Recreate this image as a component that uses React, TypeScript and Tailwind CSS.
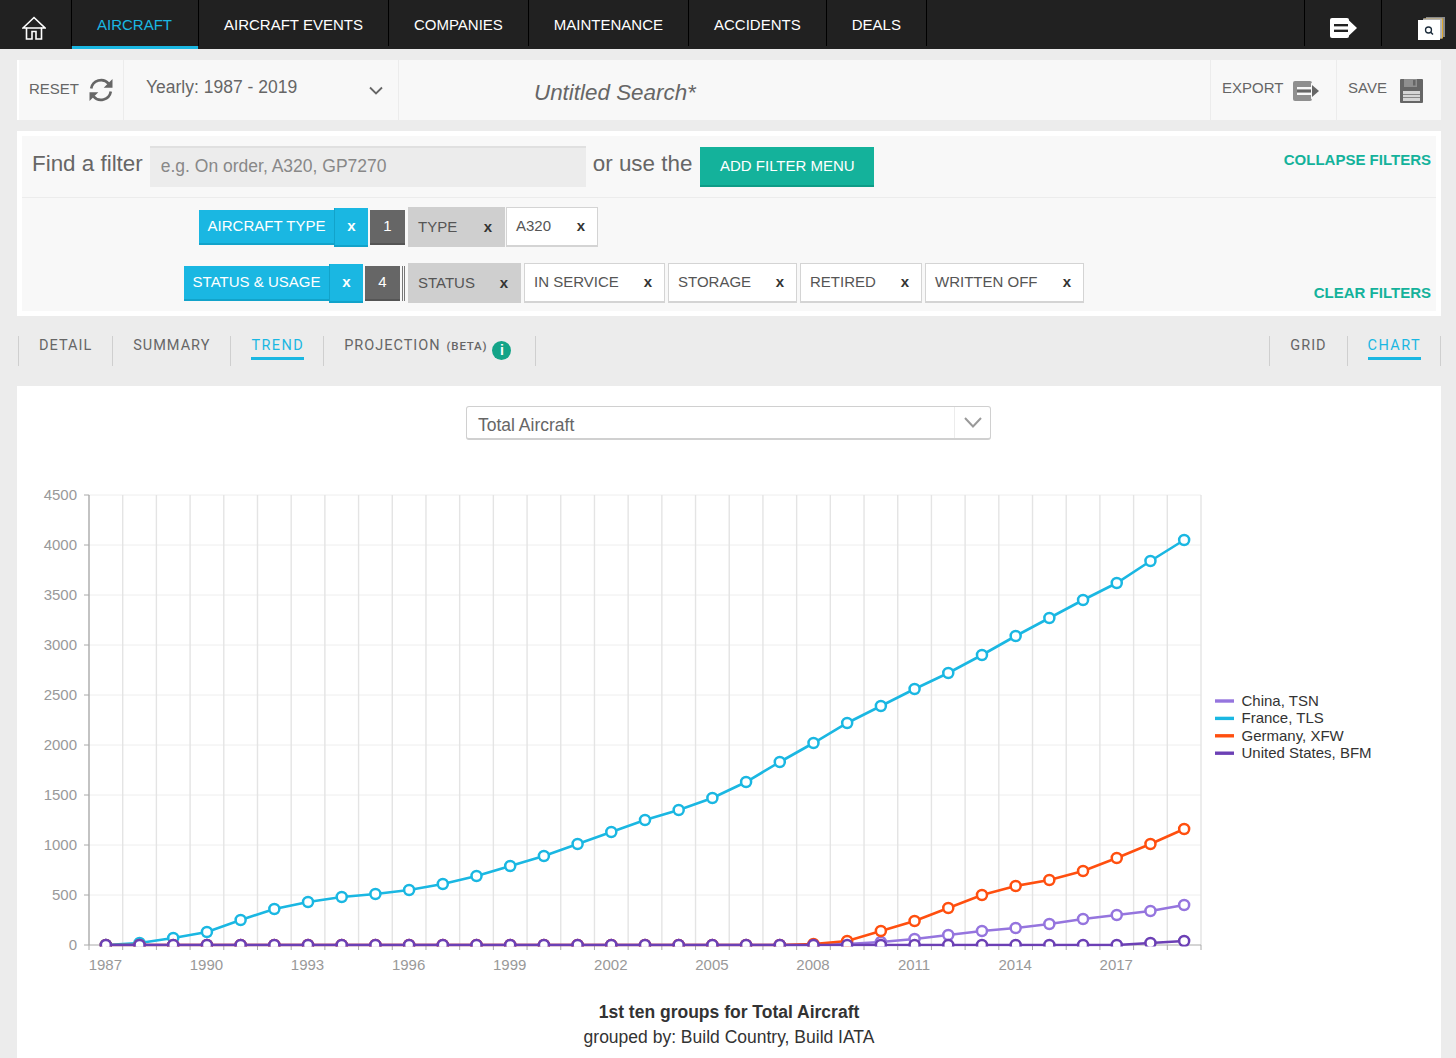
const arial = "font-['Liberation_Sans',Arial,sans-serif]";

const NAV_ITEMS = ['AIRCRAFT', 'AIRCRAFT EVENTS', 'COMPANIES', 'MAINTENANCE', 'ACCIDENTS', 'DEALS'];

const PLOT = { left: 89, right: 1201, top: 495, bottom: 945 };
const STEP = (PLOT.right - PLOT.left) / 33;
const pointX = (i: number) => PLOT.left + STEP * (i + 0.5);

const flat = (n: number) => Array.from({ length: n }, () => 945);

// y positions of each series, one per year from 1987
const SERIES = [
  {
    name: 'China, TSN',
    color: '#9575de',
    ys: [...flat(22), 944, 942, 939, 935, 931, 928, 924, 919, 915, 911, 905],
  },
  {
    name: 'France, TLS',
    color: '#1ab7e2',
    ys: [945, 943, 938, 932, 920, 909, 902, 897, 894, 890, 884, 876, 866, 856, 844, 832, 820, 810, 798, 782, 762, 743, 723, 706, 689, 673, 655, 636, 618, 600, 583, 561, 540],
  },
  {
    name: 'Germany, XFW',
    color: '#ff4f0f',
    ys: [...flat(21), 944, 941, 931, 921, 908, 895, 886, 880, 871, 858, 844, 829],
  },
  {
    name: 'United States, BFM',
    color: '#6c40b5',
    ys: [...flat(31), 943, 941],
  },
];

function HomeIcon() {
  return (
    <svg width="24" height="24" viewBox="0 0 24 24" fill="none" stroke="#fff" strokeWidth="1.6">
      <path d="M1 12 L12 1.5 L23 12 Z" fill="#212121" strokeLinejoin="miter" />
      <path d="M4.5 11.5 V23 H10 V15.5 H14 V23 H19.5 V11.5" />
    </svg>
  );
}

function RefreshIcon() {
  return (
    <svg width="24" height="24" viewBox="0 0 24 24" fill="none">
      <path d="M2.2 10.5 A10 10 0 0 1 19.6 5.6" stroke="#666" strokeWidth="2.6" />
      <path d="M23.5 1 V9.8 H14.7 Z" fill="#666" />
      <path d="M21.8 13.5 A10 10 0 0 1 4.4 18.4" stroke="#666" strokeWidth="2.6" />
      <path d="M0.5 23 V14.2 H9.3 Z" fill="#666" />
    </svg>
  );
}

function ExportIcon({ box, arrow, gap, head }: { box: string; arrow: string; gap: string; head: string }) {
  return (
    <svg width="27" height="20" viewBox="0 0 27 20">
      <rect x="0" y="0" width="19" height="20" rx="2" fill={box} />
      <rect x="4" y="6" width="15" height="2.6" fill={gap} />
      <rect x="4" y="11.4" width="15" height="2.6" fill={gap} />
      <rect x="4" y="8.6" width="15" height="2.8" fill={arrow} />
      <path d="M18 1.5 L27 10 L18 18.5 Z" fill={head} />
      <path d="M19 4 L26 10 L19 16 Z" fill={arrow} />
    </svg>
  );
}

function SaveIcon() {
  return (
    <svg width="23" height="24" viewBox="0 0 23 24">
      <path d="M1 0 H22 Q23 0 23 1 V23 Q23 24 22 24 H1 Q0 24 0 23 V1 Q0 0 1 0 Z" fill="#666" />
      <rect x="4" y="0" width="13" height="8" fill="#8f8f8f" />
      <rect x="13" y="1" width="2.5" height="5.5" fill="#666" />
      <rect x="3" y="12" width="17" height="10" fill="#d5d5d5" />
      <rect x="3" y="15" width="17" height="1" fill="#888" />
      <rect x="3" y="18" width="17" height="1" fill="#888" />
    </svg>
  );
}

function StackIcon() {
  return (
    <svg width="27" height="24" viewBox="0 0 27 24">
      <rect x="8" y="0" width="19" height="20" fill="#8a8a8a" />
      <rect x="6" y="1.5" width="19" height="20" fill="#e0a92c" />
      <rect x="5" y="1.5" width="19" height="20" fill="#b5b5b5" />
      <rect x="0" y="3" width="22" height="20" fill="#fff" />
      <circle cx="10.5" cy="13" r="3" fill="none" stroke="#1b2b3a" strokeWidth="1.3" />
      <path d="M12.5 15 L15 17.5" stroke="#1b2b3a" strokeWidth="1.5" />
    </svg>
  );
}

function TopNav() {
  return (
    <div className="flex h-[49px] bg-[#212121]">
      <div className="flex h-[46px] w-[72px] items-center justify-center border-r border-black pr-[4px] pt-[10px]">
        <HomeIcon />
      </div>
      {NAV_ITEMS.map((item, i) => (
        <div
          key={item}
          className={
            i === 0
              ? 'flex h-[49px] w-[126px] items-center border-b-[3px] border-[#1ab7e2] pl-[25px] pt-[5px] text-[15px] text-[#1ab7e2]'
              : i === 1
                ? 'flex h-[46px] items-center border-x border-black px-[25px] pt-[5px] text-[15px] text-white'
                : 'flex h-[46px] items-center border-r border-black px-[25px] pt-[5px] text-[15px] text-white'
          }
        >
          {item}
        </div>
      ))}
      <div className="ml-auto flex h-[46px] w-[77px] items-center justify-center border-l border-black pt-[10px]">
        <ExportIcon box="#fff" arrow="#fff" gap="#212121" head="#fff" />
      </div>
      <div className="flex h-[46px] w-[75px] items-center justify-end border-l border-black pr-[11px] pt-[11px]">
        <StackIcon />
      </div>
    </div>
  );
}

function Toolbar() {
  return (
    <div className="ml-[17px] mr-[15px] mt-[11px] flex h-[60px] border-l-2 border-white bg-[#f8f8f8] text-[#666]">
      <div className="flex w-[105px] items-center border-r border-[#ececec] pl-[10px] text-[15px]">
        <span className="pb-[2px]">RESET</span>
        <span className="ml-[10px]">
          <RefreshIcon />
        </span>
      </div>
      <div className="flex w-[275px] items-center justify-between border-r border-[#ececec] pb-[6px] pl-[22px] pr-[15px] text-[17.5px]">
        <span>Yearly: 1987 - 2019</span>
        <svg width="14" height="9" viewBox="0 0 14 9" fill="none" stroke="#666" strokeWidth="1.8" className="mt-[7px]">
          <path d="M1 1.5 L7 7.5 L13 1.5" />
        </svg>
      </div>
      <div className="flex-1 pl-[135px] pt-[16px] text-[22.4px] italic">Untitled Search*</div>
      <div className="flex w-[126px] items-center border-l border-[#ececec] pb-[4px] pl-[11px] text-[15px]">
        <span>EXPORT</span>
        <span className="ml-[10px] mt-[6px]">
          <ExportIcon box="#8f8f8f" arrow="#666" gap="#f8f8f8" head="#f8f8f8" />
        </span>
      </div>
      <div className="flex w-[105px] items-center border-l border-[#ececec] pb-[4px] pl-[11px] text-[15px]">
        <span>SAVE</span>
        <span className="ml-[13px] mt-[6px]">
          <SaveIcon />
        </span>
      </div>
    </div>
  );
}

function Chip({ label, width, gray }: { label: string; width: number; gray?: boolean }) {
  return (
    <div
      style={{ width }}
      className={
        gray
          ? 'flex h-[40px] items-center justify-between bg-[#cfcfcf] pl-[10px] pr-[13px] text-[15px] text-[#555]'
          : 'flex h-[40px] items-center justify-between border border-b-2 border-[#d4d4d4] bg-white pl-[9px] pr-[12px] text-[15px] text-[#555]'
      }
    >
      <span>{label}</span>
      <span className="text-[15px] font-bold text-[#333]">x</span>
    </div>
  );
}

function GroupTag({ label, width, count }: { label: string; width: number; count: string }) {
  return (
    <>
      <div
        style={{ width }}
        className="flex h-[35px] items-center justify-center border-b-2 border-[#12a3ca] bg-[#1ab7e2] text-[15px] text-white"
      >
        {label}
      </div>
      <div className="flex h-[39px] w-[34px] items-center justify-center border-b-2 border-[#12a3ca] border-l border-l-[#12a3ca] bg-[#1ab7e2] text-[15px] font-bold text-white">
        x
      </div>
      <div className="ml-[2px] flex h-[35px] w-[35px] items-center justify-center border-b-2 border-[#555] bg-[#666] text-[15px] text-white">
        {count}
      </div>
    </>
  );
}

function FilterCard() {
  return (
    <div className="ml-[17px] mr-[15px] mt-[11px] border-[5px] border-white bg-[#f8f8f8] pb-[8px]">
      <div className="flex h-[62px] border-b border-[#ececec]">
        <span className="ml-[10px] mt-[13px] text-[22.4px] leading-[30px] text-[#666]">Find a filter</span>
        <div className="ml-[7px] mt-[10px] flex h-[41px] w-[436px] items-center border-t-2 border-[#e0e0e0] bg-[#ececec] pb-[2px] pl-[11px] text-[17.5px] text-[#888]">
          e.g. On order, A320, GP7270
        </div>
        <span className="ml-[7px] mt-[13px] text-[22.4px] leading-[30px] text-[#666]">or use the</span>
        <div className="ml-[8px] mt-[11px] flex h-[40px] w-[174px] items-center justify-center border-b-2 border-[#0e9c87] bg-[#14b29b] text-[15px] text-white">
          ADD FILTER MENU
        </div>
        <span className="ml-auto mr-[5px] mt-[13px] text-[15px] font-bold text-[#14b29b]">COLLAPSE FILTERS</span>
      </div>
      <div className="mt-[9px] flex h-[40px] items-center pl-[177px]">
        <GroupTag label="AIRCRAFT TYPE" width={135} count="1" />
        <div className="ml-[3px] flex">
          <Chip label="TYPE" width={97} gray />
          <div className="ml-[1px]">
            <Chip label="A320" width={92} />
          </div>
        </div>
      </div>
      <div className="mt-[16px] flex h-[40px] items-center pl-[162px]">
        <GroupTag label="STATUS & USAGE" width={145} count="4" />
        <div className="ml-[2px] h-[35px] w-[3px] border-x border-[#777]" />
        <div className="ml-[3px] flex gap-[3px]">
          <Chip label="STATUS" width={113} gray />
          <Chip label="IN SERVICE" width={141} />
          <Chip label="STORAGE" width={129} />
          <Chip label="RETIRED" width={122} />
          <Chip label="WRITTEN OFF" width={159} />
        </div>
        <span className="ml-auto mr-[5px] mt-[21px] text-[15px] font-bold text-[#14b29b]">CLEAR FILTERS</span>
      </div>
    </div>
  );
}

function ViewTab({ label, active, children }: { label: string; active?: boolean; children?: React.ReactNode }) {
  return (
    <div className={active ? 'flex h-[30px] items-start border-r border-[#cfcfcf] pl-[20px] pr-[19px]' : 'flex h-[30px] items-start border-r border-[#cfcfcf] px-[20px]'}>
      <span
        className={
          active
            ? 'border-b-[3px] border-[#1ab7e2] pb-[2px] text-[14.5px] leading-[19px] tracking-[1.4px] text-[#1ab7e2]'
            : 'text-[14.5px] leading-[19px] tracking-[1px] text-[#666]'
        }
      >
        {label}
      </span>
      {children}
    </div>
  );
}

function ViewTabs() {
  return (
    <div className="ml-[18px] mr-[15px] mt-[20px] flex h-[50px] font-['Roboto',sans-serif]">
      <div className="h-[30px] border-l border-[#cfcfcf]" />
      <ViewTab label="DETAIL" />
      <ViewTab label="SUMMARY" />
      <ViewTab label="TREND" active />
      <ViewTab label="PROJECTION">
        <span className="ml-[6px] text-[11.5px] font-medium leading-[21px] tracking-[0.8px] text-[#666]">(BETA)</span>
        <span className="ml-[5px] mr-[4px] mt-[5px] flex h-[19px] w-[19px] items-center justify-center rounded-full bg-[#14a488] font-['Liberation_Sans',sans-serif] text-[14px] font-bold text-white">
          i
        </span>
      </ViewTab>
      <div className="ml-auto h-[30px] border-l border-[#cfcfcf]" />
      <ViewTab label="GRID" />
      <ViewTab label="CHART" active />
    </div>
  );
}

function MetricSelect() {
  return (
    <div className="ml-[449px] flex h-[34px] w-[525px] items-stretch rounded-[3px] border border-b-2 border-[#d0d0d0] bg-white text-[17.5px] text-[#666]">
      <span className="flex-1 pl-[11px] leading-[36px]">Total Aircraft</span>
      <span className="flex w-[36px] items-center justify-center border-l border-[#ececec]">
        <svg width="18" height="11" viewBox="0 0 18 11" fill="none" stroke="#9a9a9a" strokeWidth="2">
          <path d="M1 1 L9 9.5 L17 1" />
        </svg>
      </span>
    </div>
  );
}

function TrendChart() {
  const { left, right, top, bottom } = PLOT;
  return (
    <svg
      width="1424"
      height="500"
      viewBox="17 480 1424 500"
      className="mt-[40px] block"
      fontFamily="'Liberation Sans', Arial, sans-serif"
    >
      <defs>
        <clipPath id="plot-area">
          <rect x={left} y={top - 10} width={right - left} height={bottom - top + 11.5} />
        </clipPath>
      </defs>

      {Array.from({ length: 10 }, (_, i) => {
        const y = bottom - i * 50;
        return (
          <g key={i}>
            {i > 0 && <line x1={left} x2={right} y1={y} y2={y} stroke="#eeeeee" />}
            <line x1={left - 5} x2={left} y1={y} y2={y} stroke="#aaaaaa" />
            <text x={77} y={y + 5} textAnchor="end" fontSize="15" fill="#999999">
              {i * 500}
            </text>
          </g>
        );
      })}

      {Array.from({ length: 34 }, (_, i) => {
        const x = left + i * STEP;
        return (
          <g key={i}>
            {i > 0 && <line x1={x} x2={x} y1={top} y2={bottom} stroke="#e4e4e4" strokeWidth="1.4" />}
            <line x1={x} x2={x} y1={bottom} y2={bottom + 5} stroke="#aaaaaa" />
          </g>
        );
      })}

      <line x1={left} x2={left} y1={top} y2={bottom} stroke="#aaaaaa" strokeWidth="1.4" />
      <line x1={left} x2={right} y1={bottom} y2={bottom} stroke="#aaaaaa" />

      {Array.from({ length: 11 }, (_, i) => (
        <text key={i} x={pointX(i * 3) - 0.5} y={970} textAnchor="middle" fontSize="15" fill="#999999">
          {1987 + i * 3}
        </text>
      ))}

      <g clipPath="url(#plot-area)">
        {SERIES.map((s) => (
          <g key={s.name}>
            <polyline
              points={s.ys.map((y, i) => `${pointX(i)},${y}`).join(' ')}
              fill="none"
              stroke={s.color}
              strokeWidth="2.6"
            />
            {s.ys.map((y, i) => (
              <circle key={i} cx={pointX(i)} cy={y} r="5" fill="#fff" stroke={s.color} strokeWidth="2.5" />
            ))}
          </g>
        ))}
      </g>

      {SERIES.map((s, i) => {
        const y = 701 + i * 17.4;
        return (
          <g key={s.name}>
            <line x1={1215} x2={1234} y1={y} y2={y} stroke={s.color} strokeWidth="3.4" />
            <text x={1241.5} y={y + 5} fontSize="15" fill="#333333">
              {s.name}
            </text>
          </g>
        );
      })}
    </svg>
  );
}

export default function App() {
  return (
    <div className={`h-[1058px] overflow-hidden bg-[#ececec] ${arial}`}>
      <TopNav />
      <Toolbar />
      <FilterCard />
      <ViewTabs />
      <div className="ml-[17px] mr-[15px] h-[672px] bg-white pt-[20px]">
        <MetricSelect />
        <TrendChart />
        <div className="mt-[20px] text-center text-[17.5px] leading-[25px] text-[#333]">
          <div className="font-bold">1st ten groups for Total Aircraft</div>
          <div>grouped by: Build Country, Build IATA</div>
        </div>
      </div>
    </div>
  );
}
